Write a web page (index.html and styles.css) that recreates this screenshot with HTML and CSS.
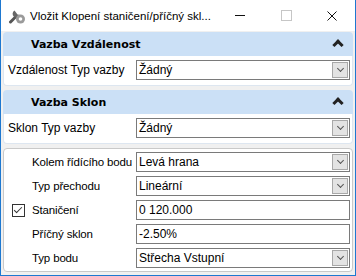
FILE: index.html
```html
<!DOCTYPE html>
<html lang="cs">
<head>
    <meta charset="UTF-8">
    <link rel="stylesheet" href="styles.css">
    <title>Vložit Klopení staničení/příčný sklon</title>
</head>
<body>
<div class="window">
    <div class="titlebar">
        <svg class="app-icon" width="18" height="16" viewBox="0 0 18 16">
            <path d="M2.5 14 L8.5 8" stroke="#555" stroke-width="3" stroke-linecap="round"/>
            <path d="M6.5 2.5 A3.8 3.8 0 1 0 12 7 L9.5 6.5 L8 4.5 Z" fill="#666"/>
            <circle cx="12.5" cy="11" r="4.5" fill="#9a9a9a"/>
            <circle cx="12.5" cy="11" r="1.8" fill="#fff"/>
        </svg>
        <span class="title">Vložit Klopení staničení/příčný skl...</span>
        <span class="tb-btn minimize"></span>
        <span class="tb-btn maximize"></span>
        <span class="tb-btn close">
            <svg width="10" height="10" viewBox="0 0 10 10"><path d="M0.5 0.5 L9.5 9.5 M9.5 0.5 L0.5 9.5" stroke="#111" stroke-width="1"/></svg>
        </span>
    </div>

    <div class="content">
        <div class="group">
            <div class="group-head">Vazba Vzdálenost <span class="chev"></span></div>
            <div class="group-body">
                <div class="row wide">
                    <span class="label">Vzdálenost Typ vazby</span>
                    <div class="combo"><span>Žádný</span><span class="drop"></span></div>
                </div>
            </div>
        </div>

        <div class="group">
            <div class="group-head">Vazba Sklon <span class="chev"></span></div>
            <div class="group-body">
                <div class="row wide">
                    <span class="label">Sklon Typ vazby</span>
                    <div class="combo"><span>Žádný</span><span class="drop"></span></div>
                </div>
            </div>
        </div>

        <div class="panel">
            <div class="row">
                <span class="check-cell"></span>
                <span class="label">Kolem řídícího bodu</span>
                <div class="combo"><span>Levá hrana</span><span class="drop"></span></div>
            </div>
            <div class="row">
                <span class="check-cell"></span>
                <span class="label">Typ přechodu</span>
                <div class="combo"><span>Lineární</span><span class="drop"></span></div>
            </div>
            <div class="row">
                <span class="check-cell"><span class="checkbox"></span></span>
                <span class="label">Staničení</span>
                <div class="field">0 120.000</div>
            </div>
            <div class="row">
                <span class="check-cell"></span>
                <span class="label">Příčný sklon</span>
                <div class="field">-2.50%</div>
            </div>
            <div class="row">
                <span class="check-cell"></span>
                <span class="label">Typ bodu</span>
                <div class="combo"><span>Střecha Vstupní</span><span class="drop"></span></div>
            </div>
        </div>
    </div>
</div>
</body>
</html>
```

FILE: styles.css
```css
body {
    margin: 0;
    font-family: "Liberation Sans", Arial, sans-serif;
    font-size: 12px;
    color: #000;
}
.window {
    width: 356px;
    height: 276px;
    box-sizing: border-box;
    border: 1px solid #1e78d0;
    border-top: none;
    background: #f0f0f0;
    display: flex;
    flex-direction: column;
}
.titlebar {
    height: 31px;
    flex: none;
    background: #fff;
    display: flex;
    align-items: center;
}
.app-icon {
    margin-left: 7px;
    margin-right: 4px;
    flex: none;
}
.title {
    flex: 1;
    min-width: 0;
    white-space: nowrap;
    font-size: 11.5px;
    color: #000;
}
.tb-btn {
    width: 46px;
    height: 31px;
    flex: none;
    display: flex;
    align-items: center;
    justify-content: center;
}
.minimize::before {
    content: "";
    width: 10px;
    height: 1px;
    background: #111;
}
.maximize::before {
    content: "";
    width: 9px;
    height: 9px;
    border: 1px solid #c6c6c6;
}
.content {
    padding: 1px 2px 2px 2px;
    display: flex;
    flex-direction: column;
    gap: 4px;
    flex: 1;
}
.group-head {
    height: 24px;
    background: #cbe0f6;
    border-radius: 4px 4px 0 0;
    font-family: "DejaVu Sans", Verdana, sans-serif;
    font-weight: bold;
    font-size: 11px;
    display: flex;
    align-items: center;
    padding-left: 28px;
    position: relative;
}
.chev {
    position: absolute;
    right: 11px;
    top: 9px;
    width: 5px;
    height: 5px;
    border-left: 3px solid #222;
    border-top: 3px solid #222;
    transform: rotate(45deg);
}
.group-body {
    background: #fff;
    border: 1px solid #dde6f0;
    border-top: none;
    border-radius: 0 0 4px 4px;
    padding: 4px 2px 5px 4px;
}
.row {
    display: flex;
    align-items: center;
    height: 20px;
}
.label {
    white-space: nowrap;
    flex: none;
}
.row.wide .label {
    width: 128px;
}
.panel {
    background: #fff;
    border: 1px solid #c9c9c9;
    border-radius: 4px;
    padding: 3px 2px 3px 4px;
    display: flex;
    flex-direction: column;
    gap: 4px;
}
.check-cell {
    width: 24px;
    flex: none;
    display: flex;
    align-items: center;
    padding-left: 4px;
    box-sizing: border-box;
}
.checkbox {
    width: 11px;
    height: 11px;
    border: 1px solid #333;
    position: relative;
}
.checkbox::after {
    content: "";
    position: absolute;
    left: 3px;
    top: 0px;
    width: 3px;
    height: 7px;
    border-right: 1px solid #333;
    border-bottom: 1px solid #333;
    transform: rotate(45deg);
}
.panel .label {
    width: 104px;
    font-size: 11.5px;
    letter-spacing: -0.15px;
}
.combo, .field {
    flex: 1;
    height: 20px;
    box-sizing: border-box;
    border: 1px solid #7a7a7a;
    display: flex;
    align-items: center;
    padding-left: 2px;
    background: #fff;
}
.combo span:first-child {
    flex: 1;
}
.drop {
    width: 16px;
    height: 16px;
    box-sizing: border-box;
    margin-right: 1px;
    background: #e3e3e3;
    border: 1px solid #a8a8a8;
    position: relative;
}
.drop::after {
    content: "";
    position: absolute;
    left: 5px;
    top: 3px;
    width: 4px;
    height: 4px;
    border-right: 1px solid #555;
    border-bottom: 1px solid #555;
    transform: rotate(45deg);
}
```
